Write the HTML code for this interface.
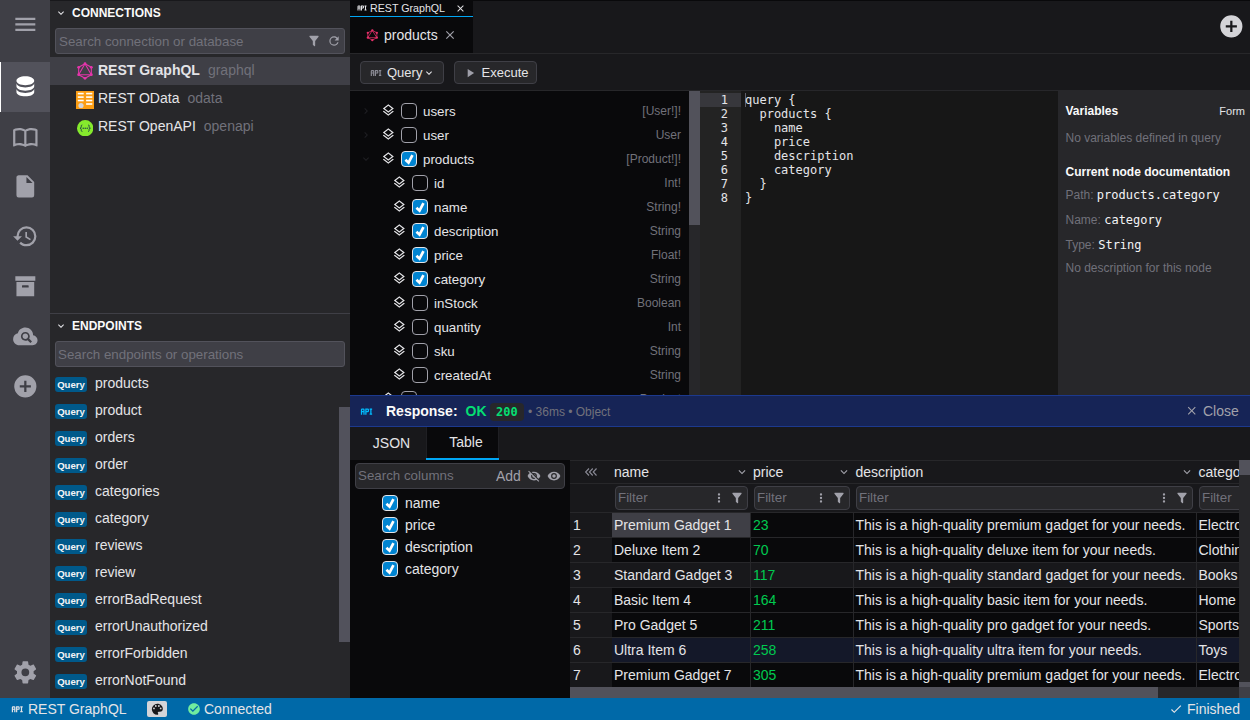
<!DOCTYPE html>
<html lang="en">
<head>
<meta charset="utf-8">
<title>DbGate - REST GraphQL</title>
<style>
*{box-sizing:border-box;margin:0;padding:0}
html,body{width:1250px;height:720px;overflow:hidden;background:#09090b}
body{position:relative;font-family:"Liberation Sans",sans-serif;font-size:14px;color:#e4e4e7}
.abs{position:absolute}
svg.i{position:absolute;fill:currentColor;display:block}
.mono{font-family:"DejaVu Sans Mono","Liberation Mono",monospace}
/* icon bar */
#iconbar{left:0;top:0;width:50px;height:698px;background:#3f3f46;color:#a1a1aa}
#iconbar .sel{left:0;top:62px;width:50px;height:50px;background:#52525b;border-left:1px solid #fff}
#iconbar svg.i{width:26.67px;height:26.67px;left:11.67px}
/* left panel */
#left{left:50px;top:0;width:300px;height:698px;background:#27272a;border-top:1px solid #18181b}
.ptitle{left:22px;font-weight:bold;font-size:12px;color:#fafafa;line-height:14px;white-space:nowrap}
.sbox{left:5px;width:290px;background:#3f3f46;border:1px solid #52525b;border-radius:3px;color:#71717a;font-size:13.33px;padding-left:3px;white-space:nowrap}
.crow{left:0;width:300px;height:28px;line-height:26px;white-space:nowrap}
.crow .t{position:absolute;left:48px;top:0}
.crow .t i{font-style:normal;color:#71717a;padding-left:8px;font-weight:normal}
.erow{left:0;width:290px;height:27px;white-space:nowrap}
.erow b{position:absolute;left:5px;top:6px;width:32px;height:15px;border-radius:3px;background:#00598a;color:#f4f4f5;font-size:9.6px;line-height:15px;text-align:center}
.erow span{position:absolute;left:45px;top:0;line-height:24px}
/* main */
.btn{height:23px;background:#27272a;border:1px solid #3f3f46;border-radius:4px;font-size:13px;line-height:21px;white-space:nowrap}
.trow{left:0;width:339px;height:24px;line-height:24px;white-space:nowrap;font-size:13.33px}
.trow .n{position:absolute;top:1px}
.trow .ty{position:absolute;right:8px;top:0;font-size:12px;color:#71717a}
.trow svg.ly{top:4.3px;width:14.67px;height:14.67px;color:#e4e4e7}
.trow svg.cv{top:6px;width:12px;height:12px;color:#1f1f23}
.cb{position:absolute;top:4px;width:16px;height:16px;border:1px solid #a1a1aa;border-radius:4px;background:#09090b}
.cb.on{background:#0084d1;border-color:#e4e4e7}
.cb.on:after{content:"";position:absolute;left:0;top:0;width:14px;height:14px;background:#fff;clip-path:polygon(2.54px 8.87px,6.91px 12.78px,11.66px 3.83px,9.28px 2.57px,6.15px 8.48px,4.34px 6.85px)}
.g{color:#71717a}
.w{color:#f4f4f5}
.hc{top:0;height:23px;line-height:25px;padding-left:2px;border-right:1px solid transparent;overflow:hidden}
.fi{top:26px;height:24px;line-height:22px;font-size:13.33px;color:#71717b;background:#27272a;border:1px solid #3f3f46;border-radius:4px;padding-left:2px;overflow:hidden}
.fi svg{color:#a1a1aa}
.gr{left:0;width:669px;height:25px;line-height:24px;border-bottom:1px solid #27272a}
.gr .c{position:absolute;top:0;height:24px;padding-left:2px;border-right:1px solid #27272a;overflow:hidden}
.gr .rn{padding-left:3px;background:#18181b;border-right-color:#18181b}
/* status bar */
#status{left:0;top:698px;width:1250px;height:22px;background:#0069a8;color:#e4e4e7;line-height:22px;white-space:nowrap}
</style>
</head>
<body>
<svg width="0" height="0" style="position:absolute">
<defs>
<symbol id="menu" viewBox="0 0 24 24"><path d="M3,6H21V8H3V6M3,11H21V13H3V11M3,16H21V18H3V16Z"/></symbol>
<symbol id="database" viewBox="0 0 24 24"><path d="M12,3C7.58,3 4,4.79 4,7C4,9.21 7.58,11 12,11C16.42,11 20,9.21 20,7C20,4.79 16.42,3 12,3M4,9V12C4,14.21 7.58,16 12,16C16.42,16 20,14.21 20,12V9C20,11.21 16.42,13 12,13C7.58,13 4,11.21 4,9M4,14V17C4,19.21 7.58,21 12,21C16.42,21 20,19.21 20,17V14C20,16.21 16.42,18 12,18C7.58,18 4,16.21 4,14Z"/></symbol>
<symbol id="book" viewBox="0 0 24 24"><path d="M12 21.5C10.65 20.65 8.2 20 6.5 20C4.85 20 3.15 20.3 1.75 21.05C1.65 21.1 1.6 21.1 1.5 21.1C1.25 21.1 1 20.85 1 20.6V6C1.6 5.55 2.25 5.25 3 5C4.11 4.65 5.33 4.5 6.5 4.5C8.45 4.5 10.55 4.9 12 6C13.45 4.9 15.55 4.5 17.5 4.5C18.67 4.5 19.89 4.65 21 5C21.75 5.25 22.4 5.55 23 6V20.6C23 20.85 22.75 21.1 22.5 21.1C22.4 21.1 22.35 21.1 22.25 21.05C20.85 20.3 19.15 20 17.5 20C15.8 20 13.35 20.65 12 21.5M11 7.5C9.64 6.9 7.84 6.5 6.5 6.5C5.3 6.5 4.1 6.65 3 7V18.5C4.1 18.15 5.3 18 6.5 18C7.84 18 9.64 18.4 11 19V7.5M13 19C14.36 18.4 16.16 18 17.5 18C18.7 18 19.9 18.15 21 18.5V7C19.9 6.65 18.7 6.5 17.5 6.5C16.16 6.5 14.36 6.9 13 7.5V19Z"/></symbol>
<symbol id="file" viewBox="0 0 24 24"><path d="M13,9V3.5L18.5,9M6,2C4.89,2 4,2.89 4,4V20A2,2 0 0,0 6,22H18A2,2 0 0,0 20,20V8L14,2H6Z"/></symbol>
<symbol id="history" viewBox="0 0 24 24"><path d="M13.5,8H12V13L16.28,15.54L17,14.33L13.5,12.25V8M13,3A9,9 0 0,0 4,12H1L4.96,16.03L9,12H6A7,7 0 0,1 13,5A7,7 0 0,1 20,12A7,7 0 0,1 13,19C11.07,19 9.32,18.21 8.06,16.94L6.64,18.36C8.27,20 10.5,21 13,21A9,9 0 0,0 22,12A9,9 0 0,0 13,3"/></symbol>
<symbol id="archive" viewBox="0 0 24 24"><path d="M3,3H21V7H3V3M4,8H20V21H4V8M9.5,11A0.5,0.5 0 0,0 9,11.5V13H15V11.5A0.5,0.5 0 0,0 14.5,11H9.5Z"/></symbol>
<symbol id="cloudsearch" viewBox="0 0 24 24"><path d="M21.86 12.5C21.1 11.63 20.15 11.13 19 11C19 9.05 18.32 7.4 16.96 6.04C15.6 4.68 13.95 4 12 4C10.42 4 9 4.47 7.75 5.43S5.67 7.62 5.25 9.15C4 9.43 2.96 10.08 2.17 11.1S1 13.28 1 14.58C1 16.09 1.54 17.38 2.61 18.43C3.69 19.5 5 20 6.5 20H18.5C19.75 20 20.81 19.56 21.69 18.69C22.56 17.81 23 16.75 23 15.5C23 14.35 22.62 13.35 21.86 12.5M16.57 18L14 15.43C13.43 15.79 12.74 16 12 16C9.79 16 8 14.21 8 12S9.79 8 12 8 16 9.79 16 12C16 12.74 15.79 13.43 15.43 14L18 16.57L16.57 18M14.5 12C14.5 13.38 13.38 14.5 12 14.5S9.5 13.38 9.5 12 10.62 9.5 12 9.5 14.5 10.62 14.5 12Z"/></symbol>
<symbol id="pluscircle" viewBox="0 0 24 24"><path d="M17,13H13V17H11V13H7V11H11V7H13V11H17M12,2A10,10 0 0,0 2,12A10,10 0 0,0 12,22A10,10 0 0,0 22,12A10,10 0 0,0 12,2Z"/></symbol>
<symbol id="cog" viewBox="0 0 24 24"><path d="M12,15.5A3.5,3.5 0 0,1 8.5,12A3.5,3.5 0 0,1 12,8.5A3.5,3.5 0 0,1 15.5,12A3.5,3.5 0 0,1 12,15.5M19.43,12.97C19.47,12.65 19.5,12.33 19.5,12C19.5,11.67 19.47,11.34 19.43,11L21.54,9.37C21.73,9.22 21.78,8.95 21.66,8.73L19.66,5.27C19.54,5.05 19.27,4.96 19.05,5.05L16.56,6.05C16.04,5.66 15.5,5.32 14.87,5.07L14.5,2.42C14.46,2.18 14.25,2 14,2H10C9.75,2 9.54,2.18 9.5,2.42L9.13,5.07C8.5,5.32 7.96,5.66 7.44,6.05L4.95,5.05C4.73,4.96 4.46,5.05 4.34,5.27L2.34,8.73C2.21,8.95 2.27,9.22 2.46,9.37L4.57,11C4.53,11.34 4.5,11.67 4.5,12C4.5,12.33 4.53,12.65 4.57,12.97L2.46,14.63C2.27,14.78 2.21,15.05 2.34,15.27L4.34,18.73C4.46,18.95 4.73,19.03 4.95,18.95L7.44,17.94C7.96,18.34 8.5,18.68 9.13,18.93L9.5,21.58C9.54,21.82 9.75,22 10,22H14C14.25,22 14.46,21.82 14.5,21.58L14.87,18.93C15.5,18.67 16.04,18.34 16.56,17.94L19.05,18.95C19.27,19.03 19.54,18.95 19.66,18.73L21.66,15.27C21.78,15.05 21.73,14.78 21.54,14.63L19.43,12.97Z"/></symbol>
<symbol id="chevdown" viewBox="0 0 24 24"><path d="M7.41,8.58L12,13.17L16.59,8.58L18,10L12,16L6,10L7.41,8.58Z"/></symbol>
<symbol id="chevright" viewBox="0 0 24 24"><path d="M8.59,16.58L13.17,12L8.59,7.41L10,6L16,12L10,18L8.59,16.58Z"/></symbol>
<symbol id="filter" viewBox="0 0 24 24"><path d="M14,12V19.88C14.04,20.18 13.94,20.5 13.71,20.71C13.32,21.1 12.69,21.1 12.3,20.71L10.29,18.7C10.06,18.47 9.96,18.16 10,17.87V12H9.97L4.21,4.62C3.87,4.19 3.95,3.56 4.38,3.22C4.57,3.08 4.78,3 5,3V3H19V3C19.22,3 19.43,3.08 19.62,3.22C20.05,3.56 20.13,4.19 19.79,4.62L14.03,12H14Z"/></symbol>
<symbol id="refresh" viewBox="0 0 24 24"><path d="M17.65,6.35C16.2,4.9 14.21,4 12,4A8,8 0 0,0 4,12A8,8 0 0,0 12,20C15.73,20 18.84,17.45 19.73,14H17.65C16.83,16.33 14.61,18 12,18A6,6 0 0,1 6,12A6,6 0 0,1 12,6C13.66,6 15.14,6.69 16.22,7.78L13,11H20V4L17.65,6.35Z"/></symbol>
<symbol id="api" viewBox="0 0 24 24"><path d="M7 7H5A2 2 0 0 0 3 9V17H5V13H7V17H9V9A2 2 0 0 0 7 7M7 11H5V9H7M14 7H10V17H12V13H14A2 2 0 0 0 16 11V9A2 2 0 0 0 14 7M14 11H12V9H14M20 9V15H21V17H17V15H18V9H17V7H21V9Z"/></symbol>
<symbol id="close" viewBox="0 0 24 24"><path d="M19,6.41L17.59,5L12,10.59L6.41,5L5,6.41L10.59,12L5,17.59L6.41,19L12,13.41L17.59,19L19,17.59L13.41,12L19,6.41Z"/></symbol>
<symbol id="play" viewBox="0 0 24 24"><path d="M8,5.14V19.14L19,12.14L8,5.14Z"/></symbol>
<symbol id="layers" viewBox="0 0 24 24"><path d="M12,18.54L19.37,12.8L21,14.07L12,21.07L3,14.07L4.62,12.81L12,18.54M12,16L3,9L12,2L21,9L12,16M12,4.53L6.26,9L12,13.47L17.74,9L12,4.53Z"/></symbol>
<symbol id="eyeoff" viewBox="0 0 24 24"><path d="M11.83,9L15,12.16C15,12.11 15,12.05 15,12A3,3 0 0,0 12,9C11.94,9 11.89,9 11.83,9M7.53,9.8L9.08,11.35C9.03,11.56 9,11.77 9,12A3,3 0 0,0 12,15C12.22,15 12.44,14.97 12.65,14.92L14.2,16.47C13.53,16.8 12.79,17 12,17A5,5 0 0,1 7,12C7,11.21 7.2,10.47 7.53,9.8M2,4.27L4.28,6.55L4.73,7C3.08,8.3 1.78,10 1,12C2.73,16.39 7,19.5 12,19.5C13.55,19.5 15.03,19.2 16.38,18.66L16.81,19.08L19.73,22L21,20.73L3.27,3M12,7A5,5 0 0,1 17,12C17,12.64 16.87,13.26 16.64,13.82L19.57,16.75C21.07,15.5 22.27,13.86 23,12C21.27,7.61 17,4.5 12,4.5C10.6,4.5 9.26,4.75 8,5.2L10.17,7.35C10.74,7.13 11.35,7 12,7Z"/></symbol>
<symbol id="eye" viewBox="0 0 24 24"><path d="M12,9A3,3 0 0,0 9,12A3,3 0 0,0 12,15A3,3 0 0,0 15,12A3,3 0 0,0 12,9M12,17A5,5 0 0,1 7,12A5,5 0 0,1 12,7A5,5 0 0,1 17,12A5,5 0 0,1 12,17M12,4.5C7,4.5 2.73,7.61 1,12C2.73,16.39 7,19.5 12,19.5C17,19.5 21.27,16.39 23,12C21.27,7.61 17,4.5 12,4.5Z"/></symbol>
<symbol id="dotsv" viewBox="0 0 24 24"><path d="M12,16A2,2 0 0,1 14,18A2,2 0 0,1 12,20A2,2 0 0,1 10,18A2,2 0 0,1 12,16M12,10A2,2 0 0,1 14,12A2,2 0 0,1 12,14A2,2 0 0,1 10,12A2,2 0 0,1 12,10M12,4A2,2 0 0,1 14,6A2,2 0 0,1 12,8A2,2 0 0,1 10,6A2,2 0 0,1 12,4Z"/></symbol>
<symbol id="check" viewBox="0 0 24 24"><path d="M21,7L9,19L3.5,13.5L4.91,12.09L9,16.17L19.59,5.59L21,7Z"/></symbol>
<symbol id="checkcircle" viewBox="0 0 24 24"><path d="M12 2C6.5 2 2 6.5 2 12S6.5 22 12 22 22 17.5 22 12 17.5 2 12 2M10 17L5 12L6.41 10.59L10 14.17L17.59 6.58L19 8L10 17Z"/></symbol>
<symbol id="palette" viewBox="0 0 24 24"><path d="M17.5,12A1.5,1.5 0 0,1 16,10.5A1.5,1.5 0 0,1 17.5,9A1.5,1.5 0 0,1 19,10.5A1.5,1.5 0 0,1 17.5,12M14.5,8A1.5,1.5 0 0,1 13,6.5A1.5,1.5 0 0,1 14.5,5A1.5,1.5 0 0,1 16,6.5A1.5,1.5 0 0,1 14.5,8M9.5,8A1.5,1.5 0 0,1 8,6.5A1.5,1.5 0 0,1 9.5,5A1.5,1.5 0 0,1 11,6.5A1.5,1.5 0 0,1 9.5,8M6.5,12A1.5,1.5 0 0,1 5,10.5A1.5,1.5 0 0,1 6.5,9A1.5,1.5 0 0,1 8,10.5A1.5,1.5 0 0,1 6.5,12M12,3A9,9 0 0,0 3,12A9,9 0 0,0 12,21A1.5,1.5 0 0,0 13.5,19.5C13.5,19.11 13.35,18.76 13.11,18.5C12.88,18.23 12.73,17.88 12.73,17.5A1.5,1.5 0 0,1 14.23,16H16A5,5 0 0,0 21,11C21,6.58 16.97,3 12,3Z"/></symbol>
<symbol id="graphql" viewBox="0 0 24 24"><g fill="none" stroke="currentColor" stroke-width="1.3" stroke-linejoin="round"><path d="M12 3.2L19.6 7.6V16.4L12 20.8L4.4 16.4V7.6Z"/><path d="M12 3.2L19.6 16.4H4.4Z"/></g><g><circle cx="12" cy="3.2" r="1.7"/><circle cx="19.6" cy="7.6" r="1.7"/><circle cx="19.6" cy="16.4" r="1.7"/><circle cx="12" cy="20.8" r="1.7"/><circle cx="4.4" cy="16.4" r="1.7"/><circle cx="4.4" cy="7.6" r="1.7"/></g></symbol>
<symbol id="graphql2" viewBox="0 0 24 24"><g fill="none" stroke="currentColor" stroke-width="1.25" stroke-linejoin="round"><path d="M12 3.9L19.4 7.9V15.9L12 19.9L4.6 15.9V7.9Z"/><path d="M12 3.9L19.4 15.9H4.6Z"/></g><g><circle cx="12" cy="3.9" r="1.9"/><circle cx="19.4" cy="7.9" r="1.9"/><circle cx="19.4" cy="15.9" r="1.9"/><circle cx="12" cy="19.9" r="1.9"/><circle cx="4.6" cy="15.9" r="1.9"/><circle cx="4.6" cy="7.9" r="1.9"/></g></symbol>
<symbol id="triple" viewBox="0 0 24 24"><g fill="none" stroke="currentColor" stroke-width="1.9"><path d="M8.5 6L2.8 12L8.5 18"/><path d="M15 6L9.3 12L15 18"/><path d="M21.5 6L15.8 12L21.5 18"/></g></symbol>
</defs>
</svg>

<!-- ICON BAR -->
<div id="iconbar" class="abs">
  <div class="sel abs"></div>
  <svg class="i" style="top:10.5px"><use href="#menu"/></svg>
  <svg class="i" style="top:72.5px;color:#fff"><use href="#database"/></svg>
  <svg class="i" style="top:122.5px"><use href="#book"/></svg>
  <svg class="i" style="top:172.5px"><use href="#file"/></svg>
  <svg class="i" style="top:222.5px"><use href="#history"/></svg>
  <svg class="i" style="top:272.5px"><use href="#archive"/></svg>
  <svg class="i" style="top:322.5px"><use href="#cloudsearch"/></svg>
  <svg class="i" style="top:372.5px"><use href="#pluscircle"/></svg>
  <svg class="i" style="top:658.5px"><use href="#cog"/></svg>
</div>

<!-- LEFT PANEL -->
<div id="left" class="abs">
  <svg class="i" style="left:5px;top:6px;width:12px;height:12px;color:#e4e4e7"><use href="#chevdown"/></svg>
  <div class="ptitle abs" style="top:5px">CONNECTIONS</div>
  <div class="sbox abs" style="top:27px;height:26px;line-height:26px">Search connection or database
    <svg class="i" style="left:251px;top:5px;width:14px;height:14px;color:#a1a1aa"><use href="#filter"/></svg>
    <svg class="i" style="left:271px;top:5px;width:14px;height:14px;color:#a1a1aa"><use href="#refresh"/></svg>
  </div>
  <div class="crow abs" style="top:56px;background:#3f3f46;font-weight:bold">
    <svg class="i" style="left:25px;top:4px;width:20px;height:20px;color:#e535ab"><use href="#graphql"/></svg>
    <span class="t">REST GraphQL<i>graphql</i></span>
  </div>
  <div class="crow abs" style="top:84px">
    <svg class="i" style="left:26px;top:6px;width:18px;height:18px" viewBox="0 0 18 18"><rect width="18" height="18" fill="#fb9d13"/><g fill="#fff"><rect x="1.8" y="1.8" width="5.9" height="1.6"/><rect x="10.1" y="1.8" width="6.2" height="1.6"/><rect x="1.8" y="5.3" width="5.9" height="1.6"/><rect x="10.1" y="5.3" width="6.2" height="1.6"/><rect x="1.8" y="8.7" width="5.9" height="1.6"/><rect x="10.1" y="8.7" width="6.2" height="1.6"/><rect x="10.1" y="12.2" width="6.2" height="1.6"/></g><circle cx="5" cy="14.5" r="2.6" fill="#d4d4d8"/></svg>
    <span class="t">REST OData<i>odata</i></span>
  </div>
  <div class="crow abs" style="top:112px">
    <svg class="i" style="left:27px;top:7px;width:16.4px;height:16.4px" viewBox="0 0 16.4 16.4"><circle cx="8.2" cy="8.2" r="8.2" fill="#85ea2d"/><g fill="none" stroke="#173647" stroke-width="0.9"><path d="M5.3 4.9C4.2 4.9 4.3 5.8 4.3 6.6C4.3 7.5 3.9 8.2 3 8.2C3.9 8.2 4.3 8.9 4.3 9.8C4.3 10.6 4.2 11.5 5.3 11.5"/><path d="M11.1 4.9C12.2 4.9 12.1 5.8 12.1 6.6C12.1 7.5 12.5 8.2 13.4 8.2C12.5 8.2 12.1 8.9 12.1 9.8C12.1 10.6 12.2 11.5 11.1 11.5"/></g><g fill="#173647"><circle cx="6.2" cy="8.2" r="0.7"/><circle cx="8.2" cy="8.2" r="0.7"/><circle cx="10.2" cy="8.2" r="0.7"/></g></svg>
    <span class="t">REST OpenAPI<i>openapi</i></span>
  </div>

  <div class="abs" style="left:0;top:312px;width:300px;height:1px;background:#3f3f46"></div>
  <svg class="i" style="left:5px;top:319px;width:12px;height:12px;color:#e4e4e7"><use href="#chevdown"/></svg>
  <div class="ptitle abs" style="top:318px">ENDPOINTS</div>
  <div class="sbox abs" style="top:340px;height:26px;line-height:26px;padding-left:2px">Search endpoints or operations</div>
  <div class="abs" style="left:0;top:370px;width:300px;height:327px;overflow:hidden">
    <div class="erow abs" style="top:0"><b>Query</b><span>products</span></div>
    <div class="erow abs" style="top:27px"><b>Query</b><span>product</span></div>
    <div class="erow abs" style="top:54px"><b>Query</b><span>orders</span></div>
    <div class="erow abs" style="top:81px"><b>Query</b><span>order</span></div>
    <div class="erow abs" style="top:108px"><b>Query</b><span>categories</span></div>
    <div class="erow abs" style="top:135px"><b>Query</b><span>category</span></div>
    <div class="erow abs" style="top:162px"><b>Query</b><span>reviews</span></div>
    <div class="erow abs" style="top:189px"><b>Query</b><span>review</span></div>
    <div class="erow abs" style="top:216px"><b>Query</b><span>errorBadRequest</span></div>
    <div class="erow abs" style="top:243px"><b>Query</b><span>errorUnauthorized</span></div>
    <div class="erow abs" style="top:270px"><b>Query</b><span>errorForbidden</span></div>
    <div class="erow abs" style="top:297px"><b>Query</b><span>errorNotFound</span></div>
  </div>
  <div class="abs" style="left:289px;top:406px;width:11px;height:235px;background:#52525c"></div>
</div>

<!-- MAIN -->
<div id="main" class="abs" style="left:350px;top:0;width:900px;height:698px">
  <!-- top tab strip -->
  <div class="abs" style="left:0;top:0;width:900px;height:17px;background:#18181b;border-top:1px solid #09090b"></div>
  <div class="abs" style="left:0;top:0;width:123px;height:17px;background:#09090b;border-bottom:1px solid #00a6f4;font-size:10.67px;line-height:16px;white-space:nowrap">
    <svg class="i" style="left:6px;top:2px;width:12px;height:12px"><use href="#api"/></svg>
    <span class="abs" style="left:20px;top:0">REST GraphQL</span>
    <svg class="i" style="left:105px;top:3px;width:11px;height:11px"><use href="#close"/></svg>
  </div>
  <!-- file tab strip -->
  <div class="abs" style="left:0;top:17px;width:900px;height:37px;background:#18181b;border-bottom:1px solid #27272a"></div>
  <div class="abs" style="left:0;top:17px;width:123px;height:36px;background:#09090b;line-height:37px;white-space:nowrap">
    <svg class="i" style="left:15px;top:10.8px;width:14.67px;height:14.67px;color:#e8306a"><use href="#graphql2"/></svg>
    <span class="abs" style="left:34px;top:0">products</span>
    <svg class="i" style="left:93px;top:11px;width:14px;height:14px;color:#a1a1aa"><use href="#close"/></svg>
  </div>
  <svg class="i" style="left:868.3px;top:12.8px;width:26.67px;height:26.67px;color:#d4d4d8"><use href="#pluscircle"/></svg>
  <!-- toolbar -->
  <div class="abs" style="left:0;top:54px;width:900px;height:37px;background:#18181b;border-bottom:1px solid #27272a"></div>
  <div class="btn abs" style="left:10px;top:61px;width:84px">
    <svg class="i" style="left:7.5px;top:4px;width:14px;height:14px;color:#8a8a94"><use href="#api"/></svg>
    <span class="abs" style="left:26px;top:0">Query</span>
    <svg class="i" style="left:61.5px;top:5px;width:12px;height:12px"><use href="#chevdown"/></svg>
  </div>
  <div class="btn abs" style="left:104px;top:61px;width:83px">
    <svg class="i" style="left:8px;top:4px;width:14px;height:14px;color:#9f9fa9"><use href="#play"/></svg>
    <span class="abs" style="left:26.5px;top:0">Execute</span>
  </div>
  <!-- tree -->
  <div id="tree" class="abs" style="left:0;top:91px;width:339px;height:304px;overflow:hidden">
    <div class="trow abs" style="top:8px"><svg class="i cv" style="left:10px"><use href="#chevright"/></svg><svg class="i ly" style="left:31px"><use href="#layers"/></svg><span class="cb" style="left:51px"></span><span class="n" style="left:73px">users</span><span class="ty">[User!]!</span></div>
    <div class="trow abs" style="top:32px"><svg class="i cv" style="left:10px"><use href="#chevright"/></svg><svg class="i ly" style="left:31px"><use href="#layers"/></svg><span class="cb" style="left:51px"></span><span class="n" style="left:73px">user</span><span class="ty">User</span></div>
    <div class="trow abs" style="top:56px"><svg class="i cv" style="left:10px"><use href="#chevdown"/></svg><svg class="i ly" style="left:31px"><use href="#layers"/></svg><span class="cb on" style="left:51px"></span><span class="n" style="left:73px">products</span><span class="ty">[Product!]!</span></div>
    <div class="trow abs" style="top:80px"><svg class="i ly" style="left:42px"><use href="#layers"/></svg><span class="cb" style="left:62px"></span><span class="n" style="left:84px">id</span><span class="ty">Int!</span></div>
    <div class="trow abs" style="top:104px"><svg class="i ly" style="left:42px"><use href="#layers"/></svg><span class="cb on" style="left:62px"></span><span class="n" style="left:84px">name</span><span class="ty">String!</span></div>
    <div class="trow abs" style="top:128px"><svg class="i ly" style="left:42px"><use href="#layers"/></svg><span class="cb on" style="left:62px"></span><span class="n" style="left:84px">description</span><span class="ty">String</span></div>
    <div class="trow abs" style="top:152px"><svg class="i ly" style="left:42px"><use href="#layers"/></svg><span class="cb on" style="left:62px"></span><span class="n" style="left:84px">price</span><span class="ty">Float!</span></div>
    <div class="trow abs" style="top:176px"><svg class="i ly" style="left:42px"><use href="#layers"/></svg><span class="cb on" style="left:62px"></span><span class="n" style="left:84px">category</span><span class="ty">String</span></div>
    <div class="trow abs" style="top:200px"><svg class="i ly" style="left:42px"><use href="#layers"/></svg><span class="cb" style="left:62px"></span><span class="n" style="left:84px">inStock</span><span class="ty">Boolean</span></div>
    <div class="trow abs" style="top:224px"><svg class="i ly" style="left:42px"><use href="#layers"/></svg><span class="cb" style="left:62px"></span><span class="n" style="left:84px">quantity</span><span class="ty">Int</span></div>
    <div class="trow abs" style="top:248px"><svg class="i ly" style="left:42px"><use href="#layers"/></svg><span class="cb" style="left:62px"></span><span class="n" style="left:84px">sku</span><span class="ty">String</span></div>
    <div class="trow abs" style="top:272px"><svg class="i ly" style="left:42px"><use href="#layers"/></svg><span class="cb" style="left:62px"></span><span class="n" style="left:84px">createdAt</span><span class="ty">String</span></div>
    <div class="trow abs" style="top:296px"><svg class="i cv" style="left:10px"><use href="#chevright"/></svg><svg class="i ly" style="left:31px"><use href="#layers"/></svg><span class="cb" style="left:51px"></span><span class="n" style="left:73px;top:3px">product</span><span class="ty">Product</span></div>
  </div>
  <!-- tree scrollbar -->
  <div class="abs" style="left:339px;top:91px;width:11px;height:304px;background:#27272a"></div>
  <div class="abs" style="left:339px;top:91px;width:11px;height:134px;background:#52525b"></div>
  <!-- editor -->
  <div id="ed" class="abs mono" style="left:350px;top:91px;width:358px;height:304px;background:#171717;font-size:12px;line-height:14px;color:#e4e4e7;white-space:pre">
    <div class="abs" style="left:0;top:0;width:41px;height:304px;background:#232323"></div>
    <div class="abs" style="left:0;top:2px;width:41px;height:14px;background:#37373c"></div>
    <div class="abs" style="left:0;top:2px;width:28px;text-align:right;color:#e4e4e7">1
2
3
4
5
6
7
8</div>
    <div class="abs" style="left:45px;top:2px;width:1px;height:14px;background:#5f5f68"></div>
    <div class="abs" style="left:45px;top:2px">query {
  products {
    name
    price
    description
    category
  }
}</div>
  </div>
  <!-- right doc panel -->
  <div id="doc" class="abs" style="left:708px;top:91px;width:192px;height:304px;background:#27272a;font-size:12px;line-height:14px;white-space:nowrap">
    <b class="abs" style="left:7.5px;top:13px;color:#fafafa">Variables</b>
    <span class="abs" style="right:5px;top:13px;font-size:11px">Form</span>
    <span class="abs g" style="left:7.5px;top:40px">No variables defined in query</span>
    <b class="abs" style="left:7.5px;top:74px;color:#fafafa">Current node documentation</b>
    <span class="abs g" style="left:7.5px;top:97px">Path: <span class="mono w">products.category</span></span>
    <span class="abs g" style="left:7.5px;top:122px">Name: <span class="mono w">category</span></span>
    <span class="abs g" style="left:7.5px;top:147px">Type: <span class="mono w">String</span></span>
    <span class="abs g" style="left:7.5px;top:170px">No description for this node</span>
  </div>
  <!-- response bar -->
  <div class="abs" style="left:0;top:395px;width:900px;height:32px;background:#162456;border-top:1px solid #1c398e;border-bottom:1px solid #1c398e;line-height:30px;white-space:nowrap">
    <svg class="i" style="left:9px;top:7.5px;width:15px;height:15px;color:#00bcff"><use href="#api"/></svg>
    <b class="abs" style="left:36px;top:0;color:#fafafa">Response:</b>
    <b class="abs" style="left:115.5px;top:0;color:#05df72">OK</b>
    <b class="abs mono" style="left:140px;top:7px;height:18px;line-height:18px;padding:0 6px;border-radius:4px;background:#27272a;color:#05df72;font-size:12px">200</b>
    <span class="abs" style="left:178px;top:1px;font-size:12px;color:#71717b">• 36ms • Object</span>
    <svg class="i" style="left:835.3px;top:8.3px;width:13.5px;height:13.5px;color:#a1a1aa"><use href="#close"/></svg>
    <span class="abs" style="left:853px;top:0;color:#a1a1aa">Close</span>
  </div>
  <!-- result tabs -->
  <div class="abs" style="left:0;top:427px;width:900px;height:33px;background:#18181b"></div>
  <div class="abs" style="left:0;top:427px;width:76px;height:33px;line-height:33px;text-align:center;padding-left:7px">JSON</div>
  <div class="abs" style="left:76px;top:427px;width:73px;height:33px;line-height:30px;text-align:center;background:#09090b;border-bottom:2px solid #00a6f4;box-shadow:inset 1px 0 #1f1f23,inset -1px 0 #1f1f23;padding-left:7px">Table</div>
  <!-- columns manager -->
  <div class="abs" style="left:5px;top:463px;width:210px;height:26px;background:#27272a;border:1px solid #3f3f46;border-radius:4px;font-size:13.33px;line-height:24px;white-space:nowrap">
    <span class="abs g" style="left:2px;top:0">Search columns</span>
    <span class="abs" style="left:140px;top:0;color:#a1a1aa;font-size:14px">Add</span>
    <svg class="i" style="left:171px;top:5px;width:14px;height:14px;color:#a1a1aa"><use href="#eyeoff"/></svg>
    <svg class="i" style="left:191px;top:5px;width:14px;height:14px;color:#a1a1aa"><use href="#eye"/></svg>
  </div>
  <div class="abs" style="left:0;top:492px;width:220px;height:22px;line-height:22px"><span class="cb on" style="left:32px;top:3px"></span><span class="abs" style="left:55px;top:0">name</span></div>
  <div class="abs" style="left:0;top:514px;width:220px;height:22px;line-height:22px"><span class="cb on" style="left:32px;top:3px"></span><span class="abs" style="left:55px;top:0">price</span></div>
  <div class="abs" style="left:0;top:536px;width:220px;height:22px;line-height:22px"><span class="cb on" style="left:32px;top:3px"></span><span class="abs" style="left:55px;top:0">description</span></div>
  <div class="abs" style="left:0;top:558px;width:220px;height:22px;line-height:22px"><span class="cb on" style="left:32px;top:3px"></span><span class="abs" style="left:55px;top:0">category</span></div>
  <!-- grid -->
  <div id="grid" class="abs" style="left:220px;top:460px;width:669px;height:227px;background:#18181b;overflow:hidden;white-space:nowrap">
    <div class="abs" style="left:0;top:0;width:669px;height:1px;background:#27272a"></div>
    <div class="abs" style="left:0;top:23px;width:669px;height:1px;background:#27272a"></div>
    <div class="abs" style="left:0;top:52px;width:669px;height:1px;background:#27272a"></div>
    <svg class="i" style="left:14px;top:5px;width:14px;height:14px;color:#8a8a96"><use href="#triple"/></svg>
    <div class="abs hc" style="left:42px;width:139px">name<svg class="i" style="right:1.5px;top:4.5px;width:14px;height:14px;color:#a1a1aa"><use href="#chevdown"/></svg></div>
    <div class="abs fi" style="left:45px;width:133px">Filter<svg class="i" style="right:21.5px;top:4px;width:14px;height:14px"><use href="#dotsv"/></svg><svg class="i" style="right:3px;top:4px;width:14px;height:14px"><use href="#filter"/></svg></div>
    <div class="abs hc" style="left:181px;width:102.5px">price<svg class="i" style="right:1.5px;top:4.5px;width:14px;height:14px;color:#a1a1aa"><use href="#chevdown"/></svg></div>
    <div class="abs fi" style="left:184px;width:96px">Filter<svg class="i" style="right:21.5px;top:4px;width:14px;height:14px"><use href="#dotsv"/></svg><svg class="i" style="right:3px;top:4px;width:14px;height:14px"><use href="#filter"/></svg></div>
    <div class="abs hc" style="left:283.5px;width:343px">description<svg class="i" style="right:1.5px;top:4.5px;width:14px;height:14px;color:#a1a1aa"><use href="#chevdown"/></svg></div>
    <div class="abs fi" style="left:286px;width:337px">Filter<svg class="i" style="right:21.5px;top:4px;width:14px;height:14px"><use href="#dotsv"/></svg><svg class="i" style="right:3px;top:4px;width:14px;height:14px"><use href="#filter"/></svg></div>
    <div class="abs hc" style="left:626.5px;width:120px">category<svg class="i" style="right:1.5px;top:4.5px;width:14px;height:14px;color:#a1a1aa"><use href="#chevdown"/></svg></div>
    <div class="abs fi" style="left:629px;width:110px">Filter<svg class="i" style="right:21.5px;top:4px;width:14px;height:14px"><use href="#dotsv"/></svg><svg class="i" style="right:3px;top:4px;width:14px;height:14px"><use href="#filter"/></svg></div>
    <div class="abs gr" style="top:53px"><span class="c rn" style="left:0;width:42px">1</span><span class="c" style="left:42px;width:139px;background:#3f3f46">Premium Gadget 1</span><span class="c" style="left:181px;width:102.5px;background:#09090b;color:#00c950">23</span><span class="c" style="left:283.5px;width:343px;background:#09090b">This is a high-quality premium gadget for your needs.</span><span class="c" style="left:626.5px;width:120px;background:#09090b">Electronics</span></div>
    <div class="abs gr" style="top:78px"><span class="c rn" style="left:0;width:42px">2</span><span class="c" style="left:42px;width:139px;background:#09090b">Deluxe Item 2</span><span class="c" style="left:181px;width:102.5px;background:#09090b;color:#00c950">70</span><span class="c" style="left:283.5px;width:343px;background:#09090b">This is a high-quality deluxe item for your needs.</span><span class="c" style="left:626.5px;width:120px;background:#09090b">Clothing</span></div>
    <div class="abs gr" style="top:103px"><span class="c rn" style="left:0;width:42px">3</span><span class="c" style="left:42px;width:139px;background:#18181b">Standard Gadget 3</span><span class="c" style="left:181px;width:102.5px;background:#18181b;color:#00c950">117</span><span class="c" style="left:283.5px;width:343px;background:#18181b">This is a high-quality standard gadget for your needs.</span><span class="c" style="left:626.5px;width:120px;background:#18181b">Books</span></div>
    <div class="abs gr" style="top:128px"><span class="c rn" style="left:0;width:42px">4</span><span class="c" style="left:42px;width:139px;background:#09090b">Basic Item 4</span><span class="c" style="left:181px;width:102.5px;background:#09090b;color:#00c950">164</span><span class="c" style="left:283.5px;width:343px;background:#09090b">This is a high-quality basic item for your needs.</span><span class="c" style="left:626.5px;width:120px;background:#09090b">Home</span></div>
    <div class="abs gr" style="top:153px"><span class="c rn" style="left:0;width:42px">5</span><span class="c" style="left:42px;width:139px;background:#09090b">Pro Gadget 5</span><span class="c" style="left:181px;width:102.5px;background:#09090b;color:#00c950">211</span><span class="c" style="left:283.5px;width:343px;background:#09090b">This is a high-quality pro gadget for your needs.</span><span class="c" style="left:626.5px;width:120px;background:#09090b">Sports</span></div>
    <div class="abs gr" style="top:178px"><span class="c rn" style="left:0;width:42px">6</span><span class="c" style="left:42px;width:139px;background:#141829">Ultra Item 6</span><span class="c" style="left:181px;width:102.5px;background:#141829;color:#00c950">258</span><span class="c" style="left:283.5px;width:343px;background:#141829">This is a high-quality ultra item for your needs.</span><span class="c" style="left:626.5px;width:120px;background:#141829">Toys</span></div>
    <div class="abs gr" style="top:203px"><span class="c rn" style="left:0;width:42px">7</span><span class="c" style="left:42px;width:139px;background:#09090b">Premium Gadget 7</span><span class="c" style="left:181px;width:102.5px;background:#09090b;color:#00c950">305</span><span class="c" style="left:283.5px;width:343px;background:#09090b">This is a high-quality premium gadget for your needs.</span><span class="c" style="left:626.5px;width:120px;background:#09090b">Electronics</span></div>
  </div>
  <!-- grid scrollbars -->
  <div class="abs" style="left:889px;top:460px;width:11px;height:238px;background:#27272a"></div>
  <div class="abs" style="left:889px;top:460px;width:11px;height:15px;background:#52525b"></div>
  <div class="abs" style="left:889px;top:682px;width:11px;height:5px;background:#52525b"></div>
  <div class="abs" style="left:889px;top:687px;width:11px;height:11px;background:#3f3f46"></div>
  <div class="abs" style="left:220px;top:687px;width:669px;height:11px;background:#27272a"></div>
  <div class="abs" style="left:220px;top:687px;width:588px;height:11px;background:#52525b"></div>
</div>

<!-- STATUS BAR -->
<div id="status" class="abs">
  <svg class="i" style="left:9.7px;top:3.8px;width:14.5px;height:14.5px;color:#e4e4e7"><use href="#api"/></svg>
  <span class="abs" style="left:28px;top:0">REST GraphQL</span>
  <div class="abs" style="left:147px;top:3px;width:20px;height:16px;background:#d4d4d8;border-radius:2px"></div>
  <svg class="i" style="left:149.7px;top:3.7px;width:14.67px;height:14.67px;color:#18181b"><use href="#palette"/></svg>
  <svg class="i" style="left:186.7px;top:3.6px;width:14px;height:14px;color:#70ec9f"><use href="#checkcircle"/></svg>
  <span class="abs" style="left:204px;top:0">Connected</span>
  <svg class="i" style="left:1169px;top:4px;width:14px;height:14px;color:#e4e4e7"><use href="#check"/></svg>
  <span class="abs" style="left:1187px;top:0">Finished</span>
</div>
</body>
</html>
